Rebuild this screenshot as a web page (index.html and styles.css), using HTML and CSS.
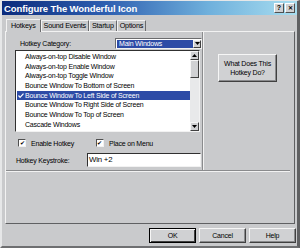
FILE: index.html
```html
<!DOCTYPE html>
<html lang="en">
<head>
    <meta charset="UTF-8">
    <title>Configure The Wonderful Icon</title>
    <link rel="stylesheet" href="styles.css">
</head>
<body>
    <div class="dialog">
        <div class="titlebar">
            <span class="title">Configure The Wonderful Icon</span>
            <span class="cap-btn">?</span>
            <span class="cap-btn close">&#x2715;</span>
        </div>

        <div class="tabs">
            <span class="tab active">Hotkeys</span>
            <span class="tab">Sound Events</span>
            <span class="tab">Startup</span>
            <span class="tab">Options</span>
        </div>

        <div class="panel">
            <div class="top">
                <div class="left">
                    <div class="category-row">
                        <label class="category-label">Hotkey Category:</label>
                        <div class="combo">
                            <span class="combo-value">Main Windows</span>
                            <span class="arrow-btn">
                                <svg width="5" height="3" viewBox="0 0 5 3"><path d="M0 0h5L2.5 3z" fill="#000"/></svg>
                            </span>
                        </div>
                    </div>

                    <div class="listbox">
                        <ul class="items">
                            <li>Always-on-top Disable Window</li>
                            <li>Always-on-top Enable Window</li>
                            <li>Always-on-top Toggle Window</li>
                            <li>Bounce Window To Bottom of Screen</li>
                            <li class="selected">
                                <svg class="check" width="6" height="5" viewBox="0 0 6 5"><path d="M0.5 2.5l1.6 1.8L5.5 0.6" stroke="#fff" stroke-width="1.2" fill="none"/></svg>
                                Bounce Window To Left Side of Screen
                            </li>
                            <li>Bounce Window To Right Side of Screen</li>
                            <li>Bounce Window To Top of Screen</li>
                            <li>Cascade Windows</li>
                        </ul>
                        <div class="scrollbar">
                            <span class="arrow-btn">
                                <svg width="5" height="3" viewBox="0 0 5 3"><path d="M0 3h5L2.5 0z" fill="#000"/></svg>
                            </span>
                            <span class="thumb"></span>
                            <span class="track"></span>
                            <span class="arrow-btn">
                                <svg width="5" height="3" viewBox="0 0 5 3"><path d="M0 0h5L2.5 3z" fill="#000"/></svg>
                            </span>
                        </div>
                    </div>

                    <div class="check-row">
                        <label class="checkbox"><span class="box">&#x2714;</span>Enable Hotkey</label>
                        <label class="checkbox second"><span class="box">&#x2714;</span>Place on Menu</label>
                    </div>

                    <div class="keystroke-row">
                        <label class="keystroke-label">Hotkey Keystroke:</label>
                        <div class="textbox">Win +2</div>
                    </div>
                </div>

                <div class="right">
                    <button type="button" class="btn help-btn">What Does This<br>Hotkey Do?</button>
                </div>
            </div>
        </div>

        <div class="buttons">
            <button type="button" class="btn default">OK</button>
            <button type="button" class="btn">Cancel</button>
            <button type="button" class="btn">Help</button>
        </div>
    </div>
</body>
</html>
```

FILE: styles.css
```css
body {
    margin: 0;
    padding: 0;
    font-family: "Liberation Sans", Arial, sans-serif;
    font-size: 7px;
    letter-spacing: -0.2px;
    color: #000;
    background: #c9cacc;
}
.dialog {
    width: 300px;
    height: 248px;
    box-sizing: border-box;
    background: #c9cacc;
    border-left: 2px solid #e6e7e8;
    border-top: 1px solid #e6e7e8;
    border-right: 3px solid #5f6062;
    border-bottom: 2px solid #6e6f71;
    display: flex;
    flex-direction: column;
}
.titlebar {
    height: 14px;
    display: flex;
    align-items: center;
    padding: 0 2px 0 2px;
    background: linear-gradient(to right, #0b2b7c 0%, #2e5fb0 35%, #6fb0dc 70%, #a9def0 100%);
}
.title {
    flex: 1;
    color: #fff;
    font-weight: bold;
    font-size: 9.5px;
    letter-spacing: -0.1px;
}
.cap-btn {
    width: 8px;
    height: 8px;
    margin-left: 1px;
    background: #d0d1d3;
    border: 1px solid;
    border-color: #fff #505050 #505050 #fff;
    font-size: 7px;
    font-weight: bold;
    line-height: 8px;
    text-align: center;
    letter-spacing: 0;
}
.cap-btn.close {
    font-size: 6px;
}
.tabs {
    display: flex;
    align-items: flex-end;
    height: 13px;
    margin-top: 3px;
    padding-left: 4px;
}
.tab {
    height: 10px;
    line-height: 10px;
    padding: 0 2px;
    border: 1px solid;
    border-color: #f2f2f2 #6a6b6d transparent #f2f2f2;
    border-bottom: none;
    font-size: 7.2px;
}
.tab.active {
    height: 12px;
    line-height: 12px;
    padding: 0 4px;
    position: relative;
    z-index: 1;
    margin-bottom: -1px;
    background: #c9cacc;
}
.panel {
    height: 193px;
    margin: 0 2px 0 3px;
    box-sizing: border-box;
    border: 1px solid;
    border-color: #f2f2f2 #5f6062 #5f6062 #f2f2f2;
}
.top {
    display: flex;
    height: 138px;
    border-bottom: 1px solid #8a8b8d;
    box-shadow: 0 1px 0 #f2f2f2;
    margin-right: 4px;
}
.left {
    width: 197px;
    border-right: 1px solid #8a8b8d;
    box-shadow: 1px 0 0 #f2f2f2;
    padding-left: 9px;
    box-sizing: border-box;
}
.category-row {
    display: flex;
    align-items: center;
    height: 11px;
    margin-top: 6px;
}
.category-label {
    width: 95px;
    padding-left: 5px;
}
.combo {
    width: 87px;
    height: 11px;
    box-sizing: border-box;
    display: flex;
    align-items: center;
    background: #fff;
    border: 1px solid;
    border-color: #6a6b6d #f2f2f2 #f2f2f2 #6a6b6d;
    padding-left: 1px;
}
.combo-value {
    flex: 1;
    height: 8px;
    line-height: 8px;
    background: #2d4ba6;
    color: #fff;
    padding-left: 2px;
}
.arrow-btn {
    width: 8px;
    height: 8px;
    box-sizing: border-box;
    display: flex;
    align-items: center;
    justify-content: center;
    background: #d0d1d3;
    border: 1px solid;
    border-color: #f6f6f6 #404040 #404040 #f6f6f6;
}
.listbox {
    display: flex;
    width: 185px;
    height: 82px;
    margin-top: 1px;
    box-sizing: border-box;
    background: #fff;
    border: 1px solid;
    border-color: #303030 #f2f2f2 #f2f2f2 #303030;
}
.items {
    flex: 1;
    list-style: none;
    margin: 0;
    padding: 1px 0 0 1px;
}
.items li {
    height: 9.7px;
    line-height: 9.7px;
    padding-left: 8px;
    white-space: nowrap;
    position: relative;
}
.items li.selected {
    background: #2d4ba6;
    color: #fff;
}
.check {
    position: absolute;
    left: 1px;
    top: 2px;
}
.scrollbar {
    width: 9px;
    display: flex;
    flex-direction: column;
    background: #e8e9ea;
}
.scrollbar .arrow-btn {
    width: 9px;
    height: 9px;
}
.thumb {
    height: 18px;
    box-sizing: border-box;
    background: #d0d1d3;
    border: 1px solid;
    border-color: #f6f6f6 #404040 #404040 #f6f6f6;
}
.track {
    flex: 1;
}
.check-row {
    display: flex;
    align-items: center;
    height: 10px;
    margin-top: 6px;
    padding-left: 3px;
}
.checkbox {
    display: flex;
    align-items: center;
}
.checkbox.second {
    margin-left: 22px;
}
.box {
    width: 8px;
    height: 8px;
    box-sizing: border-box;
    margin-right: 5px;
    background: #fff;
    border: 1px solid;
    border-color: #505050 #f2f2f2 #f2f2f2 #505050;
    font-size: 6px;
    line-height: 6px;
    text-align: center;
    letter-spacing: 0;
}
.keystroke-row {
    display: flex;
    align-items: center;
    height: 14px;
    margin-top: 5px;
}
.keystroke-label {
    width: 71px;
    padding-left: 1px;
}
.textbox {
    width: 114px;
    height: 14px;
    box-sizing: border-box;
    background: #fff;
    border: 1px solid;
    border-color: #303030 #f2f2f2 #f2f2f2 #303030;
    padding-left: 1px;
    line-height: 12px;
    font-size: 7.8px;
}
.right {
    flex: 1;
    padding: 22px 0 0 15px;
}
.btn {
    font-family: "Liberation Sans", Arial, sans-serif;
    font-size: 7px;
    letter-spacing: -0.2px;
    color: #000;
    background: #d0d1d3;
    border: 1px solid;
    border-color: #f6f6f6 #404040 #404040 #f6f6f6;
    box-shadow: inset -1px -1px 0 #8a8b8d;
    padding: 0;
    margin: 0;
}
.help-btn {
    width: 59px;
    height: 28px;
    line-height: 9px;
}
.buttons {
    display: flex;
    justify-content: flex-end;
    gap: 3px;
    margin-top: 4px;
    padding-right: 1px;
}
.buttons .btn {
    width: 47px;
    height: 15px;
}
.btn.default {
    border: 1px solid #000;
    box-shadow: inset 1px 1px 0 #f6f6f6, inset -1px -1px 0 #404040;
}
```
